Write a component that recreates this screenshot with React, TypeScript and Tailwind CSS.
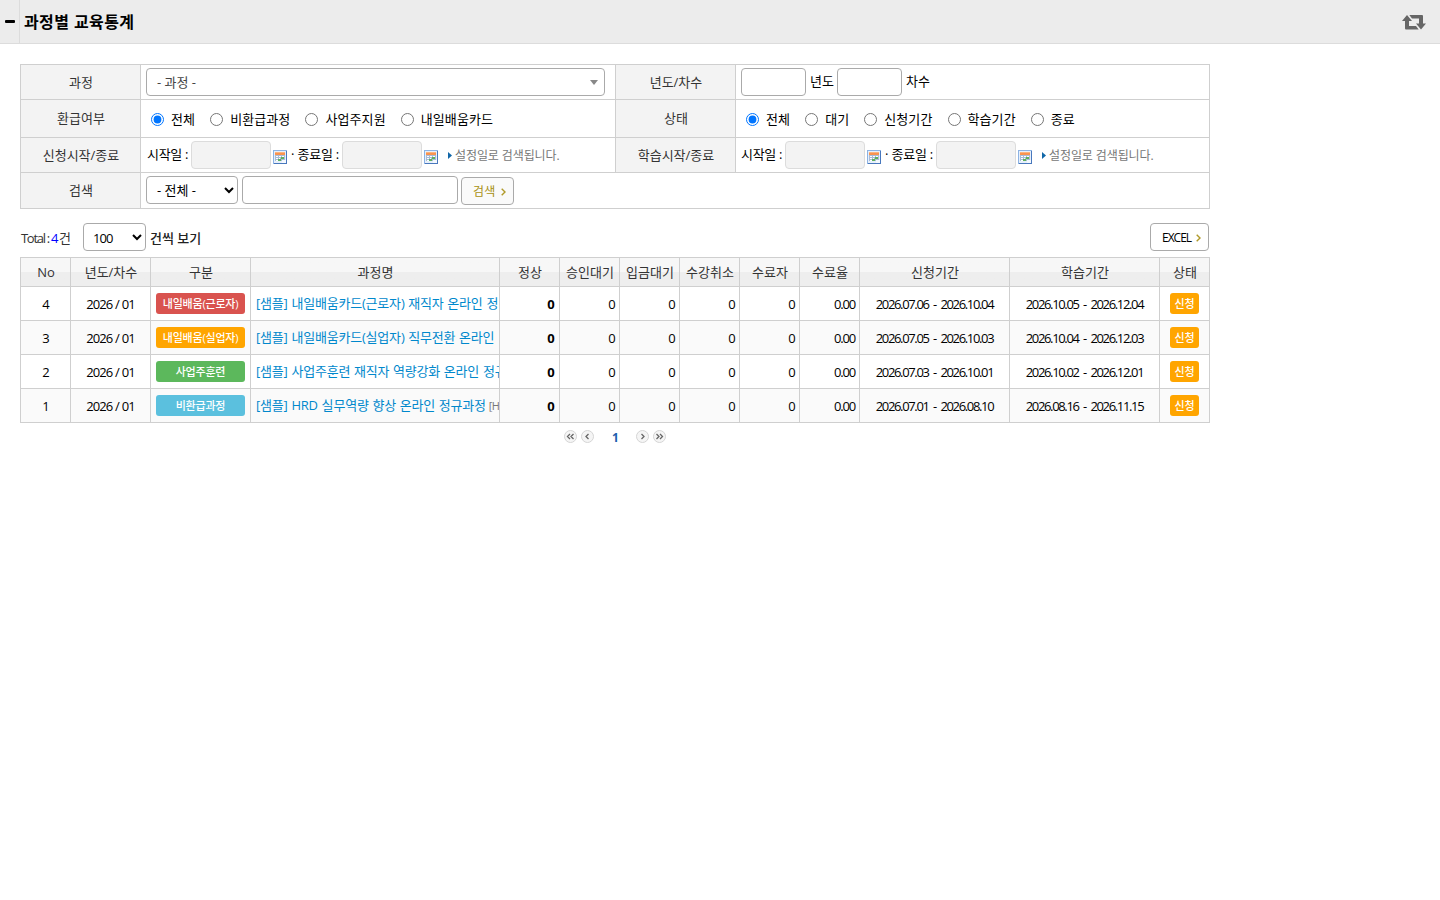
import type { ReactNode } from 'react';

const rows = [
  {
    no: 4,
    badge: '내일배움(근로자)',
    color: 'bg-[#d9534f]',
    title: '[샘플] 내일배움카드(근로자) 재직자 온라인 정',
    apply: '2026.07.06 - 2026.10.04',
    study: '2026.10.05 - 2026.12.04',
  },
  {
    no: 3,
    badge: '내일배움(실업자)',
    color: 'bg-[#ffa500]',
    title: '[샘플] 내일배움카드(실업자) 직무전환 온라인',
    apply: '2026.07.05 - 2026.10.03',
    study: '2026.10.04 - 2026.12.03',
  },
  {
    no: 2,
    badge: '사업주훈련',
    color: 'bg-[#5cb85c]',
    title: '[샘플] 사업주훈련 재직자 역량강화 온라인 정규',
    apply: '2026.07.03 - 2026.10.01',
    study: '2026.10.02 - 2026.12.01',
  },
  {
    no: 1,
    badge: '비환급과정',
    color: 'bg-[#5bc0de]',
    title: '[샘플] HRD 실무역량 향상 온라인 정규과정',
    code: '[HR',
    apply: '2026.07.01 - 2026.08.10',
    study: '2026.08.16 - 2026.11.15',
  },
];

const heads = [
  'No', '년도/차수', '구분', '과정명', '정상', '승인대기', '입금대기',
  '수강취소', '수료자', '수료율', '신청기간', '학습기간', '상태',
];

const td = 'border-r border-b border-[#cfcfcf] p-0';

function Th({ children }: { children: ReactNode }) {
  return (
    <th className="border-r border-b border-[#cfcfcf] bg-[#f3f3f3] p-0 pb-px pl-px text-center font-normal text-[#333]">
      {children}
    </th>
  );
}

function RadioGroup({ name, items }: { name: string; items: string[] }) {
  return (
    <div className="flex items-center gap-[15px] pt-0.5 pl-2.5 tracking-[0.1px]">
      {items.map((item, i) => (
        <label key={item} className="flex items-center">
          <input type="radio" name={name} defaultChecked={i === 0} className="mr-[7px] size-[13px]" />
          <span className="mb-0.5">{item}</span>
        </label>
      ))}
    </div>
  );
}

function CalendarIcon() {
  return (
    <svg width="14" height="14" viewBox="0 0 14 14" shapeRendering="crispEdges" className="mt-[3px] ml-0.5">
      <path d="M0 0h14v14H0z" fill="#8db3e3" />
      <path d="M13 1h1v13H1v-1h12z" fill="#4878bd" />
      <path d="M1 1h12v12H1z" fill="#e6effb" />
      <path d="M2 2h10v3H2z" fill="#f9934f" />
      <path d="M2 2h10v1H2z" fill="#fbb27c" />
      <path d="M2 5h10v6H2z" fill="#a9bbd6" />
      <path d="M3 6h2v1H3zM6 6h2v1H6zM9 6h2v1H9zM3 8h2v1H3zM6 8h1v1H6zM3 10h2v1H3z" fill="#fff" />
      <path d="M8 7h3v2H8zM5 9h3v2H5z" fill="#5fb15c" />
      <path d="M9 10h4v3H9z" fill="#f4f8fe" />
    </svg>
  );
}

function DateRange({ className }: { className: string }) {
  return (
    <div className={`flex items-center ${className}`}>
      <span className="mb-0.5 w-11 whitespace-nowrap tracking-[-0.3px]">시작일 :</span>
      <span className="h-7 w-20 rounded border border-[#dcdcdc] bg-[#f3f3f3]" />
      <CalendarIcon />
      <span className="mb-0.5 ml-1 w-[51px] whitespace-nowrap tracking-[-0.2px]">· 종료일 :</span>
      <span className="h-7 w-20 rounded border border-[#dcdcdc] bg-[#f3f3f3]" />
      <CalendarIcon />
      <svg width="4" height="7" viewBox="0 0 4 7" className="ml-2.5">
        <path d="M0 0l4 3.5L0 7z" fill="#1167a8" />
      </svg>
      <span className="mt-px ml-[3px] text-xs whitespace-nowrap tracking-[-0.1px] text-[#777]">
        설정일로 검색됩니다.
      </span>
    </div>
  );
}

function Arrow() {
  return (
    <svg width="5" height="8" viewBox="0 0 5 8" fill="none" stroke="#b09a2a" strokeWidth="1.4">
      <path d="M.7.7L4 4 .7 7.3" />
    </svg>
  );
}

function PageButton({ d }: { d: string }) {
  return (
    <svg width="13" height="13" viewBox="0 0 13 13" fill="none">
      <circle cx="6.5" cy="6.5" r="6" fill="#f5f5f5" stroke="#d4d4d4" />
      <path d={d} stroke="#666" strokeWidth="1.3" />
    </svg>
  );
}

export default function App() {
  return (
    <div className="h-[900px] w-[1440px] overflow-hidden bg-white font-['Open_Sans','Noto_Sans_CJK_KR',sans-serif] text-[13px] leading-5 text-black">
      <header className="flex h-11 items-center border-b border-[#dcdcdc] bg-[#ececec]">
        <div className="flex h-full w-5 items-center border-r border-[#dcdcdc] pl-[5px]">
          <span className="h-[3px] w-2.5 rounded-[1px] bg-black" />
        </div>
        <h1 className="ml-1 flex-1 text-base font-bold tracking-[0.4px]">과정별 교육통계</h1>
        <svg width="24" height="15" viewBox="0 0 24 15" fill="#666" className="mt-0.5 mr-3.5">
          <path d="M5 0l5 6H7v5h7l2.7 3.5H4a1 1 0 0 1-1-1V6H0z" />
          <path d="M19 14.5l-5-6h3v-5h-7L7.3 0H20a1 1 0 0 1 1 1v7.5h3z" />
        </svg>
      </header>

      <main className="mt-5 ml-5 w-[1190px]">
        <table className="w-full table-fixed border-separate border-spacing-0 border-t border-l border-[#cfcfcf]">
          <colgroup>
            <col className="w-[120px]" />
            <col className="w-[475px]" />
            <col className="w-[120px]" />
            <col className="w-[474px]" />
          </colgroup>
          <tbody>
            <tr className="h-[35px]">
              <Th>과정</Th>
              <td className={td}>
                <div className="ml-[5px] flex h-7 w-[459px] items-center justify-between rounded border border-[#aaa] pr-1.5 pl-2.5 text-[#444]">
                  - 과정 -
                  <svg width="8" height="5" viewBox="0 0 8 5">
                    <path d="M0 0h8L4 5z" fill="#888" />
                  </svg>
                </div>
              </td>
              <Th>년도/차수</Th>
              <td className={td}>
                <div className="flex items-center pl-[5px]">
                  <input className="h-7 w-[65px] rounded border border-[#aaa]" />
                  <span className="mx-1 mb-0.5 w-[23px] whitespace-nowrap">년도</span>
                  <input className="h-7 w-[65px] rounded border border-[#aaa]" />
                  <span className="mb-0.5 ml-1">차수</span>
                </div>
              </td>
            </tr>
            <tr className="h-[38px]">
              <Th>환급여부</Th>
              <td className={td}>
                <RadioGroup name="refund" items={['전체', '비환급과정', '사업주지원', '내일배움카드']} />
              </td>
              <Th>상태</Th>
              <td className={td}>
                <RadioGroup name="status" items={['전체', '대기', '신청기간', '학습기간', '종료']} />
              </td>
            </tr>
            <tr className="h-[35px]">
              <Th>신청시작/종료</Th>
              <td className={td}>
                <DateRange className="pl-1.5" />
              </td>
              <Th>학습시작/종료</Th>
              <td className={td}>
                <DateRange className="pl-[5px]" />
              </td>
            </tr>
            <tr className="h-9">
              <Th>검색</Th>
              <td colSpan={3} className={td}>
                <div className="flex items-start pl-[5px]">
                  <select className="h-7 w-[92px] rounded border border-[#aaa] bg-white pl-1.5">
                    <option>- 전체 -</option>
                  </select>
                  <input className="ml-1 h-7 w-[216px] rounded border border-[#aaa]" />
                  <button className="mt-px ml-[3px] flex h-7 w-[53px] items-center gap-[5px] rounded border border-[#aaa] bg-[#fafafa] pt-px pl-[11px] text-xs tracking-[0.3px] text-[#a89010]">
                    검색
                    <Arrow />
                  </button>
                </div>
              </td>
            </tr>
          </tbody>
        </table>

        <div className="mt-3.5 flex h-[34px] items-start">
          <p className="mt-[5px] ml-px w-[62px] whitespace-nowrap tracking-[-1.3px] text-[#333]">
            Total : <span className="text-[#0000ff]">4</span> 건
          </p>
          <select className="h-7 w-[63px] rounded border border-[#aaa] bg-white pt-0.5 pl-[5px] tracking-[-0.9px]">
            <option>100</option>
          </select>
          <span className="mt-[5px] ml-1 font-medium text-[#222]">건씩 보기</span>
          <button className="mr-px ml-auto flex h-7 w-[59px] items-center gap-[5px] rounded border border-[#aaa] pt-px pl-[11px] text-xs tracking-[-1px]">
            EXCEL
            <Arrow />
          </button>
        </div>

        <table className="w-full table-fixed border-separate border-spacing-0 border-t border-l border-[#cfcfcf]">
          <colgroup>
            <col className="w-[50px]" />
            <col className="w-20" />
            <col className="w-[100px]" />
            <col className="w-[249px]" />
            <col span={6} className="w-[60px]" />
            <col span={2} className="w-[150px]" />
            <col className="w-[50px]" />
          </colgroup>
          <thead>
            <tr className="h-[29px]">
              {heads.map((head) => (
                <th
                  key={head}
                  className="border-r border-b border-[#cfcfcf] bg-linear-to-b from-[#f7f7f7] from-50% to-[#eee] to-50% p-0 pl-px text-center font-normal whitespace-nowrap text-[#333]"
                >
                  {head}
                </th>
              ))}
            </tr>
          </thead>
          <tbody>
            {rows.map((row) => (
              <tr key={row.no} className="h-[34px] text-center tracking-[-0.8px] even:bg-[#fafafa]">
                <td className={td}>{row.no}</td>
                <td className={`${td} tracking-[-1px] [word-spacing:0.6px]`}>2026 / 01</td>
                <td className={td}>
                  <div className={`mx-[5px] h-[21px] rounded-[3px] text-[11px] leading-[21px] font-medium tracking-[-0.2px] text-white ${row.color}`}>
                    {row.badge}
                  </div>
                </td>
                <td className={`${td} overflow-hidden pb-px! pl-[5px]! text-left whitespace-nowrap`}>
                  <span className="tracking-[-0.2px] text-[#0088cc] [word-spacing:0.6px]">{row.title}</span>
                  {row.code && <span className="ml-[3px] text-[11px] text-[#777]">{row.code}</span>}
                </td>
                <td className={`${td} pr-[5px]! text-right font-bold`}>0</td>
                <td className={`${td} pr-1! text-right`}>0</td>
                <td className={`${td} pr-1! text-right`}>0</td>
                <td className={`${td} pr-1! text-right`}>0</td>
                <td className={`${td} pr-1! text-right`}>0</td>
                <td className={`${td} pr-1! text-right tracking-[-1.2px]`}>0.00</td>
                <td className={`${td} tracking-[-1.35px] whitespace-nowrap [word-spacing:2.5px]`}>{row.apply}</td>
                <td className={`${td} tracking-[-1.35px] whitespace-nowrap [word-spacing:2.5px]`}>{row.study}</td>
                <td className={td}>
                  <div className="mx-auto h-[21px] w-[29px] rounded-[3px] bg-[#ffa500] text-[11px] leading-[21px] font-medium tracking-[-0.1px] text-white">
                    신청
                  </div>
                </td>
              </tr>
            ))}
          </tbody>
        </table>

        <nav className="mt-[7px] flex items-center justify-center gap-1">
          <PageButton d="M6 4L3.5 6.5 6 9M9.5 4L7 6.5 9.5 9" />
          <PageButton d="M7.5 4L5 6.5 7.5 9" />
          <span className="h-[13px] w-[34px] pl-px text-center text-xs leading-[15px] font-bold text-[#1d5fad]">1</span>
          <PageButton d="M5.5 4L8 6.5 5.5 9" />
          <PageButton d="M3.5 4L6 6.5 3.5 9M7 4l2.5 2.5L7 9" />
        </nav>
      </main>
    </div>
  );
}
